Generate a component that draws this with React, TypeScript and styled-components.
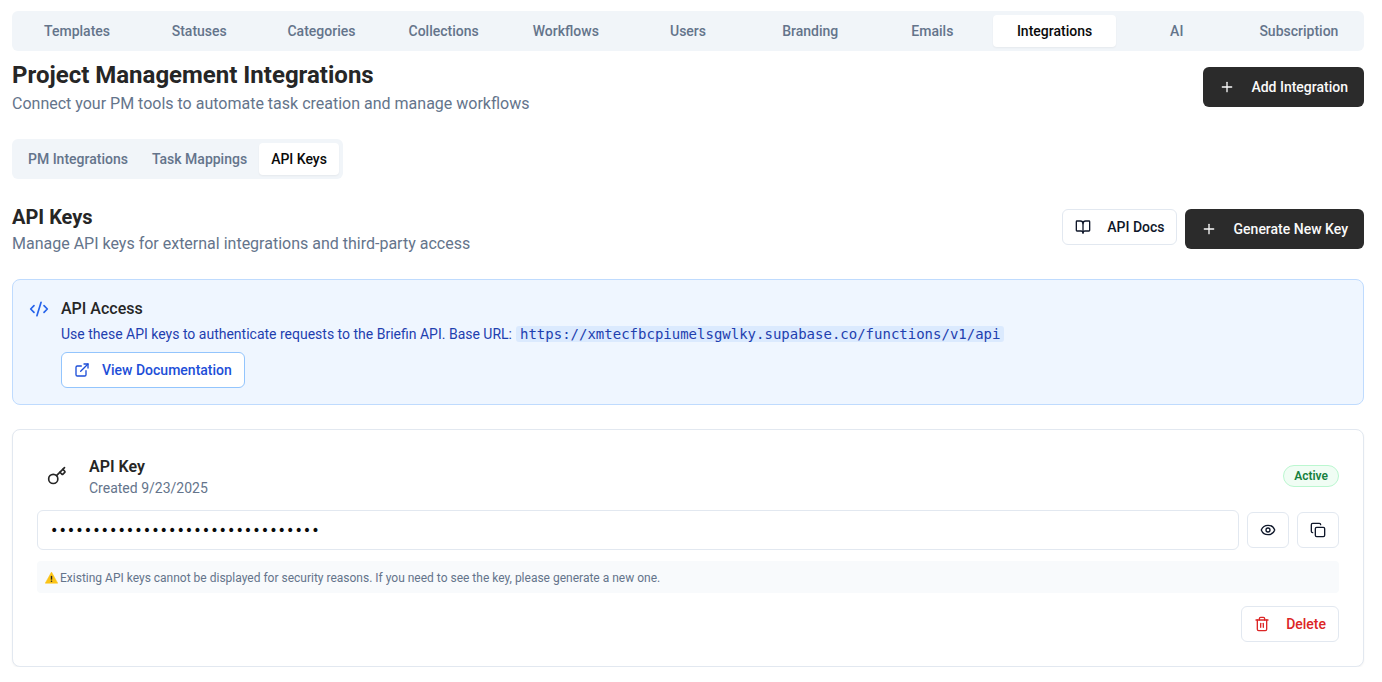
import React from "react";
import styled, { createGlobalStyle } from "styled-components";
import { BookOpen, CodeXml, Copy, ExternalLink, Eye, Key, Plus, Trash2 } from "lucide-react";

const Global = createGlobalStyle`
  html, body { margin: 0; padding: 0; background: #fff; }
  body { font-family: Roboto, "Liberation Sans", sans-serif; color: #262626; }
  * { box-sizing: border-box; }
`;

const Page = styled.div`
  padding: 11px 18px 0 12px;
  display: flex;
  flex-direction: column;
`;

const TabBar = styled.div`
  display: grid;
  grid-template-columns: repeat(11, 1fr);
  height: 40px;
  padding: 4px;
  background: #f1f5f9;
  border-radius: 6px;
`;

const SubTabBar = styled.div`
  display: inline-flex;
  align-self: flex-start;
  height: 40px;
  padding: 4px;
  background: #f1f5f9;
  border-radius: 6px;
  margin-top: 23px;
`;

const Tab = styled.div<{ $active?: boolean; $pad?: number }>`
  display: flex;
  align-items: center;
  justify-content: center;
  padding: 0 ${(p) => p.$pad ?? 0}px;
  font-size: 14px;
  font-weight: 500;
  border-radius: 4px;
  color: ${(p) => (p.$active ? "#0a0a0a" : "#64748b")};
  background: ${(p) => (p.$active ? "#fff" : "transparent")};
  box-shadow: ${(p) => (p.$active ? "0 1px 2px rgba(0,0,0,.05)" : "none")};
`;

const Header = styled.div`
  display: flex;
  justify-content: space-between;
  align-items: flex-start;
`;

const PageHead = styled(Header)`
  margin-top: 8px;
`;

const SectionHead = styled(Header)`
  margin-top: 24px;
`;

const H1 = styled.h1`
  margin: 0;
  font-size: 24px;
  line-height: 32px;
  font-weight: 700;
  color: #262626;
`;

const H2 = styled.h2`
  margin: 0;
  font-size: 20px;
  line-height: 28px;
  font-weight: 700;
  color: #262626;
`;

const Sub = styled.p`
  margin: 1px 0 0;
  font-size: 16px;
  line-height: 24px;
  color: #64748b;
`;

const Actions = styled.div`
  display: flex;
  gap: 8px;
  align-items: flex-start;
  margin-top: 6px;
`;

const DarkButton = styled.button<{ $top?: number; $gap?: number }>`
  display: inline-flex;
  align-items: center;
  gap: ${(p) => p.$gap ?? 16}px;
  height: 40px;
  padding: 0 16px;
  border: 0;
  border-radius: 6px;
  background: #2b2b2b;
  color: #fafafa;
  font: 500 14px Roboto, sans-serif;
  margin-top: ${(p) => p.$top ?? 0}px;
`;

const OutlineButton = styled.button<{ $w?: number }>`
  display: inline-flex;
  align-items: center;
  justify-content: center;
  gap: 16px;
  height: 36px;
  width: ${(p) => (p.$w ? `${p.$w}px` : "auto")};
  padding: ${(p) => (p.$w ? "0" : "0 12px")};
  background: #fff;
  border: 1px solid #e2e8f0;
  border-radius: 6px;
  color: #0f172a;
  font: 500 14px Roboto, sans-serif;
`;

const DocsButton = styled(OutlineButton)`
  padding: 0 11px 0 12px;
`;

const DangerButton = styled(OutlineButton)`
  color: #dc2626;
`;

const Alert = styled.section`
  margin-top: 23px;
  display: flex;
  gap: 12px;
  height: 126px;
  padding: 19px 17px 0 16px;
  background: #eff6ff;
  border: 1px solid #bfdbfe;
  border-radius: 8px;
`;

const AlertIcon = styled.div`
  color: #2563eb;
  height: 20px;
  display: flex;
  align-items: center;
`;

const AlertBody = styled.div`
  display: flex;
  flex-direction: column;
  align-items: flex-start;
`;

const AlertTitle = styled.div`
  font-size: 16px;
  line-height: 24px;
  margin-top: -2px;
  font-weight: 500;
  color: #262626;
`;

const AlertText = styled.div`
  font-size: 14px;
  line-height: 20px;
  margin-top: 3px;
  color: #1e40af;
`;

const Code = styled.code`
  font-family: "DejaVu Sans Mono", monospace;
  font-size: 14px;
  margin-left: 4px;
  padding: 0 4px;
  background: #dbeafe;
  border-radius: 3px;
  color: #1e40af;
`;

const DocButton = styled.button`
  display: inline-flex;
  align-items: center;
  gap: 12px;
  height: 36px;
  margin-top: 8px;
  padding: 0 12px;
  background: #fff;
  border: 1px solid #93c5fd;
  border-radius: 6px;
  color: #1d4ed8;
  font: 500 14px Roboto, sans-serif;
`;

const Card = styled.section`
  margin-top: 24px;
  height: 238px;
  padding: 24px 24px 0;
  background: #fff;
  border: 1px solid #e2e8f0;
  border-radius: 8px;
  box-shadow: 0 1px 2px rgba(0,0,0,.05);
`;

const KeyRow = styled.div`
  display: flex;
  align-items: center;
  justify-content: space-between;
  height: 44px;
`;

const KeyInfo = styled.div`
  display: flex;
  align-items: center;
  gap: 22px;
  padding-left: 10px;
`;

const KeyTitle = styled.div`
  font-size: 16px;
  line-height: 22px;
  font-weight: 600;
  color: #262626;
  margin-top: 2px;
`;

const KeyDate = styled.div`
  font-size: 14px;
  line-height: 22px;
  margin-top: -1px;
  color: #64748b;
`;

const Badge = styled.span`
  display: inline-flex;
  align-items: center;
  height: 22px;
  padding: 0 10px;
  font-size: 12px;
  font-weight: 600;
  color: #15803d;
  background: #f0fdf4;
  border: 1px solid #bbf7d0;
  border-radius: 999px;
`;

const InputRow = styled.div`
  display: flex;
  align-items: center;
  gap: 8px;
  margin-top: 12px;
`;

const KeyInput = styled.input`
  flex: 1;
  height: 40px;
  padding: 0 12px;
  border: 1px solid #e2e8f0;
  border-radius: 6px;
  background: #fff;
  font: 14px "DejaVu Sans Mono", monospace;
  color: #0a0a0a;
`;

const Note = styled.div`
  display: flex;
  align-items: center;
  gap: 2px;
  margin-top: 11px;
  height: 32px;
  padding: 1px 8px 0;
  background: #f8fafc;
  border-radius: 4px;
  font-size: 12px;
  color: #64748b;
`;

const Footer = styled.div`
  display: flex;
  justify-content: flex-end;
  margin-top: 13px;
`;

const Warn = () => (
  <svg width="13" height="13" viewBox="0 0 24 24">
    <path d="M12 2 L23.5 22.5 H.5 Z" fill="#fbc417" stroke="#fbc417" strokeLinejoin="round" />
    <path d="M12 9v7" stroke="#262626" strokeWidth="2.6" />
    <circle cx="12" cy="19" r="1.5" fill="#262626" />
  </svg>
);

const tabs = ["Templates", "Statuses", "Categories", "Collections", "Workflows", "Users", "Branding", "Emails", "Integrations", "AI", "Subscription"];

export default function App() {
  return (
    <Page>
      <Global />
      <TabBar>
        {tabs.map((t) => (
          <Tab key={t} $active={t === "Integrations"}>{t}</Tab>
        ))}
      </TabBar>
      <PageHead>
        <div>
          <H1>Project Management Integrations</H1>
          <Sub>Connect your PM tools to automate task creation and manage workflows</Sub>
        </div>
        <DarkButton $top={8}><Plus size={16} />Add Integration</DarkButton>
      </PageHead>
      <SubTabBar>
        <Tab $pad={12}>PM Integrations</Tab>
        <Tab $pad={12}>Task Mappings</Tab>
        <Tab $pad={12} $active>API Keys</Tab>
      </SubTabBar>
      <SectionHead>
        <div>
          <H2>API Keys</H2>
          <Sub>Manage API keys for external integrations and third-party access</Sub>
        </div>
        <Actions>
          <DocsButton><BookOpen size={16} />API Docs</DocsButton>
          <DarkButton $gap={17}><Plus size={16} />Generate New Key</DarkButton>
        </Actions>
      </SectionHead>
      <Alert>
        <AlertIcon><CodeXml size={20} /></AlertIcon>
        <AlertBody>
          <AlertTitle>API Access</AlertTitle>
          <AlertText>
            Use these API keys to authenticate requests to the Briefin API. Base URL:
            <Code>https://xmtecfbcpiumelsgwlky.supabase.co/functions/v1/api</Code>
          </AlertText>
          <DocButton><ExternalLink size={16} />View Documentation</DocButton>
        </AlertBody>
      </Alert>
      <Card>
        <KeyRow>
          <KeyInfo>
            <Key size={20} />
            <div>
              <KeyTitle>API Key</KeyTitle>
              <KeyDate>Created 9/23/2025</KeyDate>
            </div>
          </KeyInfo>
          <Badge>Active</Badge>
        </KeyRow>
        <InputRow>
          <KeyInput type="password" readOnly value="aaaaaaaaaaaaaaaaaaaaaaaaaaaaaaaa" />
          <OutlineButton $w={42}><Eye size={16} /></OutlineButton>
          <OutlineButton $w={42}><Copy size={16} /></OutlineButton>
        </InputRow>
        <Note><Warn />Existing API keys cannot be displayed for security reasons. If you need to see the key, please generate a new one.</Note>
        <Footer>
          <DangerButton><Trash2 size={16} />Delete</DangerButton>
        </Footer>
      </Card>
    </Page>
  );
}
